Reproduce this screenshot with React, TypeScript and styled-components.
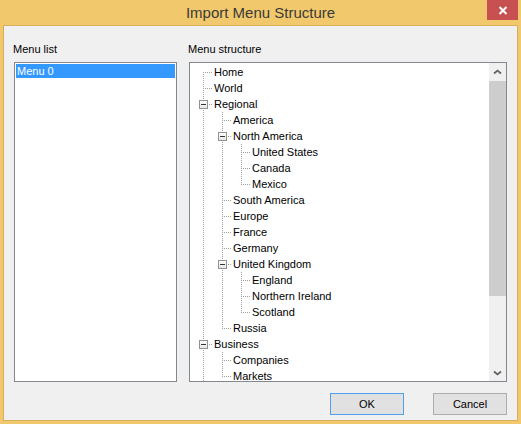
import React from "react";
import styled, { createGlobalStyle } from "styled-components";

type Node = { label: string; children?: Node[]; more?: boolean };

const tree: Node[] = [
  { label: "Home" },
  { label: "World" },
  {
    label: "Regional",
    children: [
      { label: "America" },
      {
        label: "North America",
        children: [{ label: "United States" }, { label: "Canada" }, { label: "Mexico" }],
      },
      { label: "South America" },
      { label: "Europe" },
      { label: "France" },
      { label: "Germany" },
      {
        label: "United Kingdom",
        children: [{ label: "England" }, { label: "Northern Ireland" }, { label: "Scotland" }],
      },
      { label: "Russia" },
    ],
  },
  {
    label: "Business",
    more: true,
    children: [{ label: "Companies" }, { label: "Markets" }],
  },
];

type Row = {
  label: string;
  guides: boolean[];
  hasNext: boolean;
  first: boolean;
  expandable: boolean;
};

function flatten(nodes: Node[], guides: boolean[] = [], out: Row[] = []): Row[] {
  nodes.forEach((n, i) => {
    const hasNext = i < nodes.length - 1 || !!n.more;
    out.push({
      label: n.label,
      guides,
      hasNext,
      first: guides.length === 0 && i === 0,
      expandable: !!n.children,
    });
    if (n.children) flatten(n.children, [...guides, hasNext], out);
  });
  return out;
}

const rows = flatten(tree);

const GlobalStyle = createGlobalStyle`
  html, body { margin: 0; padding: 0; }
  body {
    background: #f1c96c;
    font-family: "Liberation Sans", Arial, sans-serif;
  }
`;

const Window = styled.div`
  width: 521px;
  height: 424px;
  box-sizing: border-box;
  padding: 0 3px 3px;
  background: #f1c96c;
  display: flex;
  flex-direction: column;
`;

const TitleBar = styled.div`
  height: 25px;
  flex-shrink: 0;
  display: grid;
  grid-template-columns: 1fr auto 1fr;
  align-items: center;
`;

const Title = styled.div`
  grid-column: 2;
  font-size: 15px;
  color: #3a3a3a;
  padding-bottom: 1px;
`;

const CloseButton = styled.div`
  grid-column: 3;
  justify-self: end;
  align-self: start;
  width: 31px;
  height: 20px;
  background: #c75050;
  display: flex;
  align-items: center;
  justify-content: center;
`;

const Client = styled.div`
  flex: 1;
  box-sizing: border-box;
  background: #f0f0f0;
  border: 1px solid #d6ae5c;
  padding: 16px 10px 0;
  display: flex;
  flex-direction: column;
`;

const Panes = styled.div`
  display: flex;
  gap: 12px;
`;

const Pane = styled.div<{ $w: number }>`
  width: ${(p) => p.$w}px;
  display: flex;
  flex-direction: column;
`;

const Caption = styled.div`
  font-size: 11px;
  line-height: 14px;
  height: 14px;
  margin: 0 0 6px -1px;
  color: #000;
`;

const Box = styled.div`
  height: 320px;
  box-sizing: border-box;
  border: 1px solid #828790;
  background: #fff;
  display: flex;
`;

const ListItem = styled.div<{ $selected?: boolean }>`
  margin: 1px;
  flex: 1;
  align-self: flex-start;
  height: 14px;
  line-height: 14px;
  padding-left: 1px;
  font-size: 11px;
  background: ${(p) => (p.$selected ? "#3399ff" : "transparent")};
  color: ${(p) => (p.$selected ? "#fff" : "#000")};
`;

const TreeArea = styled.div`
  flex: 1;
  overflow: hidden;
  padding: 1px 0 0 4px;
`;

const TreeRow = styled.div`
  display: flex;
  height: 16px;
`;

const Cell = styled.span`
  position: relative;
  width: 19px;
  height: 16px;
  flex-shrink: 0;
`;

const VLine = styled.span<{ $top: number; $h: number }>`
  position: absolute;
  left: 9px;
  top: ${(p) => p.$top}px;
  height: ${(p) => p.$h}px;
  width: 1px;
  background: repeating-linear-gradient(to bottom, #a0a0a0 0 1px, transparent 1px 2px);
`;

const HLine = styled.span`
  position: absolute;
  left: 11px;
  top: 8px;
  width: 8px;
  height: 1px;
  background: repeating-linear-gradient(to right, #a0a0a0 0 1px, transparent 1px 2px);
`;

const ExpandBox = styled.span`
  position: absolute;
  left: 5px;
  top: 4px;
  width: 9px;
  height: 9px;
  box-sizing: border-box;
  border: 1px solid #919191;
  background: linear-gradient(#ffffff, #e6e6e6);
  display: flex;
  align-items: center;
  justify-content: center;
  &::after {
    content: "";
    width: 5px;
    height: 1px;
    background: #333;
  }
`;

const Label = styled.span`
  padding-left: 1px;
  font-size: 11px;
  line-height: 16px;
  white-space: nowrap;
  color: #000;
`;

const ScrollBar = styled.div`
  width: 17px;
  flex-shrink: 0;
  background: #f0f0f0;
  display: flex;
  flex-direction: column;
`;

const ArrowButton = styled.div`
  height: 17px;
  display: flex;
  align-items: center;
  justify-content: center;
`;

const Track = styled.div`
  flex: 1;
`;

const Thumb = styled.div`
  margin-top: 1px;
  height: 215px;
  background: #cdcdcd;
`;

const Footer = styled.div`
  display: flex;
  justify-content: flex-end;
  gap: 29px;
  margin-top: 11px;
`;

const Button = styled.div<{ $default?: boolean }>`
  width: 74px;
  height: 22px;
  box-sizing: border-box;
  border: 1px solid ${(p) => (p.$default ? "#4fa0ec" : "#adadad")};
  background: #e1e1e1;
  font-size: 11px;
  color: #000;
  display: flex;
  align-items: center;
  justify-content: center;
`;

const Chevron = ({ down }: { down?: boolean }) => (
  <svg width="9" height="6" viewBox="0 0 9 6">
    <path
      d={down ? "M1 1.5 L4.5 4.5 L8 1.5" : "M1 4.5 L4.5 1.5 L8 4.5"}
      fill="none"
      stroke="#606060"
      strokeWidth="1.7"
    />
  </svg>
);

function TreeLine({ row }: { row: Row }) {
  return (
    <TreeRow>
      {row.guides.map((g, i) => (
        <Cell key={i}>{g && <VLine $top={0} $h={16} />}</Cell>
      ))}
      <Cell>
        <VLine $top={row.first ? 8 : 0} $h={(row.hasNext ? 16 : 9) - (row.first ? 8 : 0)} />
        <HLine />
        {row.expandable && <ExpandBox />}
      </Cell>
      <Label>{row.label}</Label>
    </TreeRow>
  );
}

export default function App() {
  return (
    <>
      <GlobalStyle />
      <Window>
        <TitleBar>
          <Title>Import Menu Structure</Title>
          <CloseButton>
            <svg width="10" height="9" viewBox="0 0 10 9">
              <path d="M1.5 1 L8.5 8 M8.5 1 L1.5 8" stroke="#fff" strokeWidth="2" />
            </svg>
          </CloseButton>
        </TitleBar>
        <Client>
          <Panes>
            <Pane $w={163}>
              <Caption>Menu list</Caption>
              <Box>
                <ListItem $selected>Menu 0</ListItem>
              </Box>
            </Pane>
            <Pane $w={318}>
              <Caption>Menu structure</Caption>
              <Box>
                <TreeArea>
                  {rows.map((r, i) => (
                    <TreeLine key={i} row={r} />
                  ))}
                </TreeArea>
                <ScrollBar>
                  <ArrowButton>
                    <Chevron />
                  </ArrowButton>
                  <Track>
                    <Thumb />
                  </Track>
                  <ArrowButton>
                    <Chevron down />
                  </ArrowButton>
                </ScrollBar>
              </Box>
            </Pane>
          </Panes>
          <Footer>
            <Button $default>OK</Button>
            <Button>Cancel</Button>
          </Footer>
        </Client>
      </Window>
    </>
  );
}
